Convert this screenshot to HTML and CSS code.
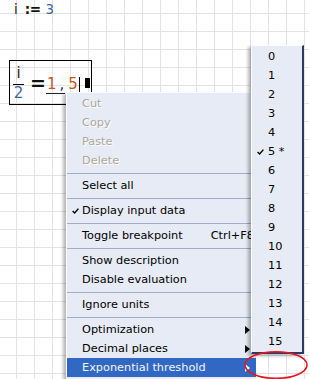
FILE: index.html
```html
<!DOCTYPE html>
<html lang="en">
<head>
  <meta charset="UTF-8" />
  <title>Worksheet</title>
  <link rel="stylesheet" href="styles.css">
</head>
<body>

  <!-- Worksheet canvas -->
  <div class="sheet">

    <div class="region assign">
      <span class="var">i</span><span class="def">:=</span><span class="const">3</span>
    </div>

    <div class="region eval">
      <span class="frac">
        <span class="var">i</span>
        <span class="const">2</span>
      </span>
      <span class="equals">=</span>
      <span class="result"><span class="digit">1</span><span class="comma">,</span></span><span class="digit last">5</span>
      <span class="caret"></span>
      <span class="block"></span>
    </div>

    <!-- Context menu -->
    <ul class="menu main-menu">
      <li class="item disabled"><span class="check"></span><span>Cut</span></li>
      <li class="item disabled"><span class="check"></span><span>Copy</span></li>
      <li class="item disabled"><span class="check"></span><span>Paste</span></li>
      <li class="item disabled"><span class="check"></span><span>Delete</span></li>
      <li class="sep"></li>
      <li class="item"><span class="check"></span><span>Select all</span></li>
      <li class="sep"></li>
      <li class="item">
        <span class="check"><svg width="7" height="6" viewBox="0 0 7 6"><path d="M0.6 3.1 L2.6 5 L6.4 0.6" fill="none" stroke="#000" stroke-width="1.4"/></svg></span>
        <span>Display input data</span>
      </li>
      <li class="sep"></li>
      <li class="item"><span class="check"></span><span>Toggle breakpoint</span><span class="shortcut">Ctrl+F8</span></li>
      <li class="sep"></li>
      <li class="item"><span class="check"></span><span>Show description</span></li>
      <li class="item"><span class="check"></span><span>Disable evaluation</span></li>
      <li class="sep"></li>
      <li class="item"><span class="check"></span><span>Ignore units</span></li>
      <li class="sep"></li>
      <li class="item"><span class="check"></span><span>Optimization</span><span class="arrow"></span></li>
      <li class="item"><span class="check"></span><span>Decimal places</span><span class="arrow"></span></li>
      <li class="item active"><span class="check"></span><span>Exponential threshold</span><span class="arrow"></span></li>
    </ul>

    <!-- Submenu -->
    <ul class="menu sub-menu">
      <li class="item"><span class="check"></span><span>0</span></li>
      <li class="item"><span class="check"></span><span>1</span></li>
      <li class="item"><span class="check"></span><span>2</span></li>
      <li class="item"><span class="check"></span><span>3</span></li>
      <li class="item"><span class="check"></span><span>4</span></li>
      <li class="item">
        <span class="check"><svg width="7" height="6" viewBox="0 0 7 6"><path d="M0.6 3.1 L2.6 5 L6.4 0.6" fill="none" stroke="#000" stroke-width="1.4"/></svg></span>
        <span>5 *</span>
      </li>
      <li class="item"><span class="check"></span><span>6</span></li>
      <li class="item"><span class="check"></span><span>7</span></li>
      <li class="item"><span class="check"></span><span>8</span></li>
      <li class="item"><span class="check"></span><span>9</span></li>
      <li class="item"><span class="check"></span><span>10</span></li>
      <li class="item"><span class="check"></span><span>11</span></li>
      <li class="item"><span class="check"></span><span>12</span></li>
      <li class="item"><span class="check"></span><span>13</span></li>
      <li class="item"><span class="check"></span><span>14</span></li>
      <li class="item"><span class="check"></span><span>15</span></li>
    </ul>

    <!-- Red annotation -->
    <svg class="mark" width="66" height="30" viewBox="0 0 66 30">
      <ellipse cx="33" cy="15" rx="31" ry="13.3" fill="none" stroke="#e8141c" stroke-width="1.6"/>
    </svg>

  </div>

</body>
</html>
```

FILE: styles.css
```css
* {
  box-sizing: border-box;
}

html, body {
  margin: 0;
  padding: 0;
  overflow: hidden;
}

.sheet {
  position: relative;
  width: 309px;
  height: 379px;
  background-color: #fff;
  background-image:
    linear-gradient(to right, #e3e3e3 1px, transparent 1px),
    linear-gradient(to bottom, #e3e3e3 1px, transparent 1px);
  background-size: 18px 18px;
  background-position: 16px 13px;
  font-family: 'DejaVu Sans', sans-serif;
}

/* Math regions */
.region {
  position: absolute;
  display: flex;
  align-items: center;
}

.region > * {
  flex-shrink: 0;
}

.var {
  color: #2b2721;
}

.const {
  color: #3d64a3;
}

.assign {
  left: 14px;
  top: 1px;
  font-size: 13.5px;
  line-height: 17px;
}

.def {
  font-weight: bold;
  margin: 0 5px 0 7px;
  color: #111;
  letter-spacing: -0.5px;
}

.eval {
  left: 9px;
  top: 60px;
  width: 83px;
  height: 45px;
  border: 1px solid #000;
  padding-left: 3px;
  font-size: 15px;
}

.frac {
  display: flex;
  flex-direction: column;
  align-items: center;
  width: 11px;
  line-height: 17px;
  margin-top: 2px;
}

.frac .var {
  border-bottom: 1px solid #000;
  width: 100%;
  text-align: center;
  padding-bottom: 2px;
}

.equals {
  font-weight: bold;
  font-size: 19px;
  margin: 0 0 0 6px;
  color: #111;
}

.result {
  display: flex;
  border-bottom: 1px solid #222;
  padding: 0 1px 0 1px;
  margin-top: 3px;
}

.digit {
  color: #c8561e;
}

.digit.last {
  margin-left: 3px;
  margin-top: 2px;
}

.comma {
  color: #20305a;
  margin-left: 3px;
}

.caret {
  width: 1px;
  height: 16px;
  background: #000;
  margin: 4px 0 0 1px;
}

.block {
  width: 5px;
  height: 10px;
  background: #000;
  margin: 0 0 0 5px;
}

/* Menus */
.menu {
  position: absolute;
  margin: 0;
  padding: 1px 0;
  list-style: none;
  background: #e7ebf6;
  border-top: 1px solid #fbfcff;
  border-left: 1px solid #fbfcff;
  font-size: 11.3px;
  color: #000;
  box-shadow: -3px 2px 3px rgba(0, 0, 0, 0.28);
}

.main-menu {
  left: 66px;
  top: 92px;
  width: 190px;
  height: 300px;
}

.sub-menu {
  left: 251px;
  top: 45px;
  width: 53px;
  border-right: 2px solid #2e3a66;
  border-bottom: 2px solid #2e3a66;
}

.item {
  display: grid;
  grid-template-columns: 15px 1fr auto;
  align-items: center;
  height: 19px;
  padding-right: 6px;
  white-space: nowrap;
}

.sub-menu .item {
  grid-template-columns: 16px 1fr;
}

.check {
  display: flex;
  align-items: center;
  padding-left: 5px;
}

.disabled {
  color: #aca899;
  text-shadow: 1px 1px 0 #ffffff;
}

.active {
  background: #3168c4;
  color: #f4f4f4;
}

.shortcut {
  margin-right: -4px;
}

.arrow {
  width: 0;
  height: 0;
  border-left: 5px solid #000;
  border-top: 4px solid transparent;
  border-bottom: 4px solid transparent;
}

.active .arrow {
  border-left-color: #fff;
}

.sep {
  height: 6px;
  display: flex;
  align-items: center;
}

.sep::after {
  content: '';
  flex: 1;
  height: 1px;
  background: #a2adca;
}

.mark {
  position: absolute;
  left: 243px;
  top: 350px;
}
```
